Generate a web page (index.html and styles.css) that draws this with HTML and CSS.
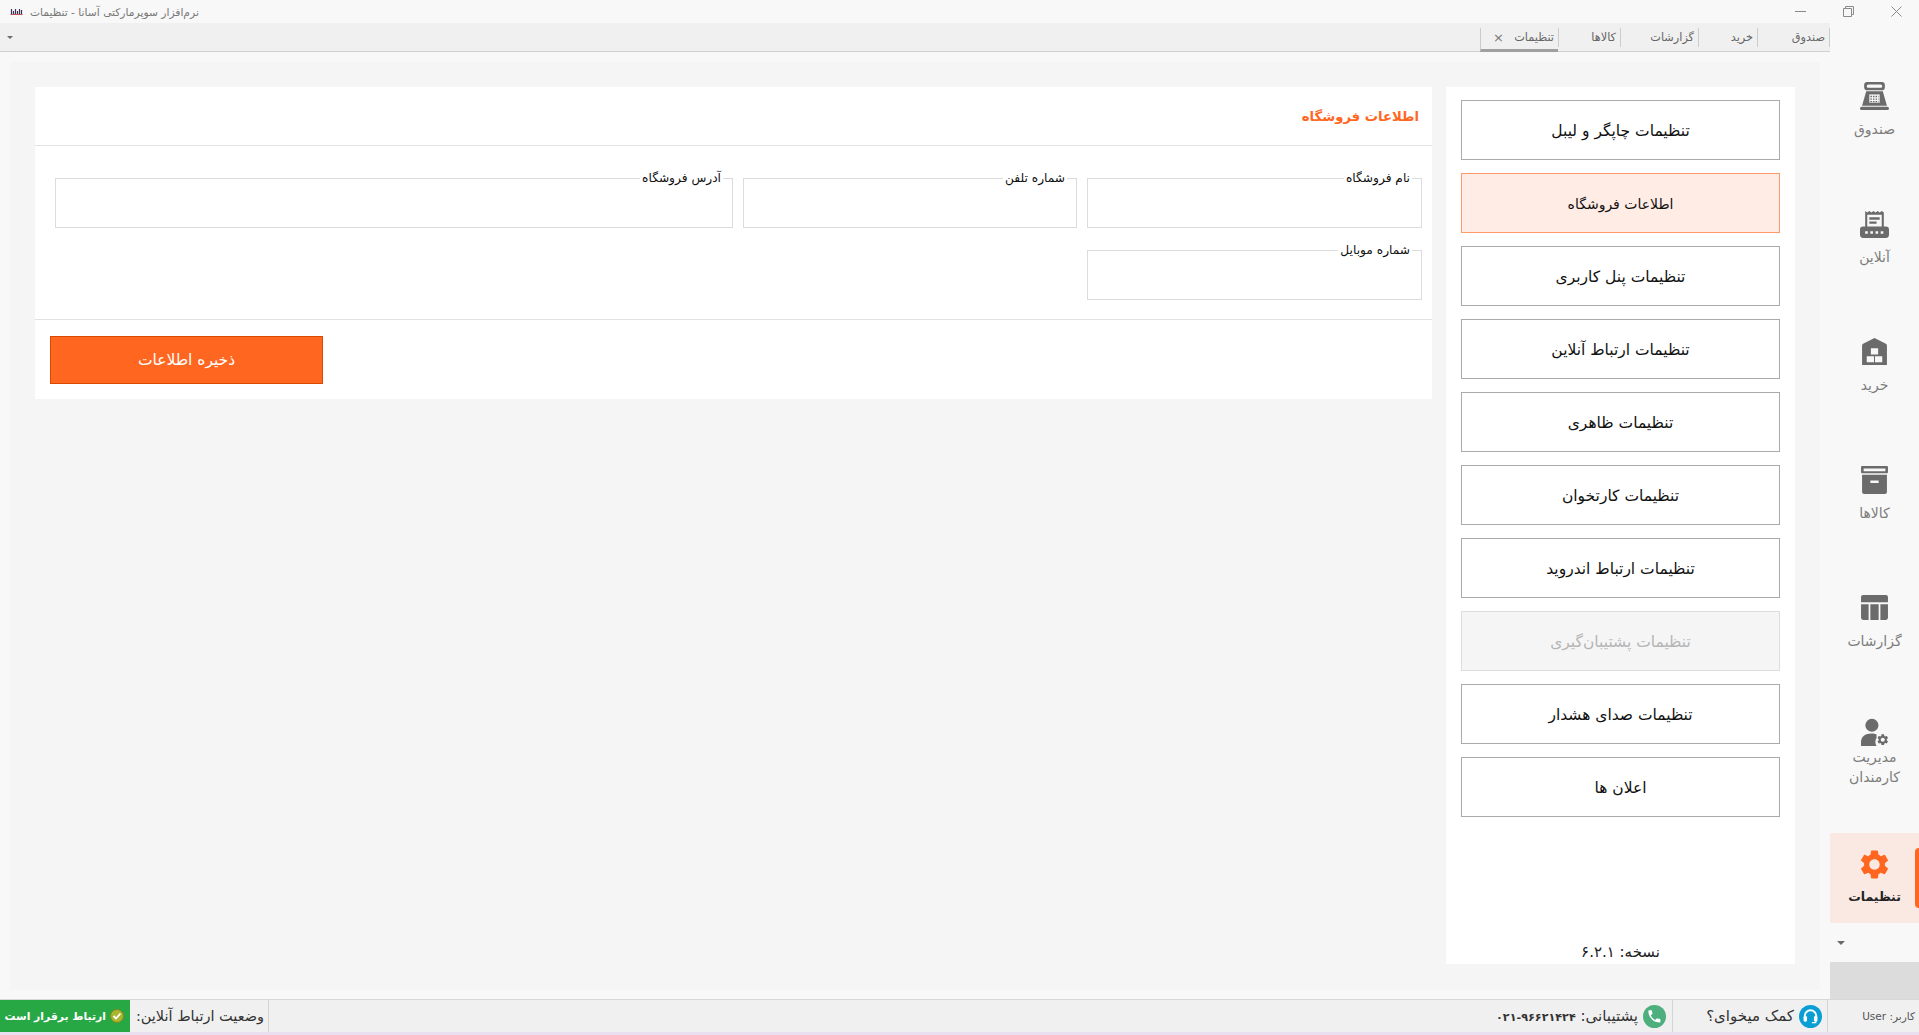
FILE: index.html
```html
<!DOCTYPE html>
<html lang="fa" dir="rtl">
<head>
    <meta charset="UTF-8">
    <title>نرم‌افزار سوپرمارکتی آسانا - تنظیمات</title>
    <link rel="stylesheet" href="styles.css">
</head>
<body>
    <header class="titlebar">
        <div class="win-controls">
            <svg class="win-btn" viewBox="0 0 11 11"><path d="M0.5 0.5 10.5 10.5M10.5 0.5 0.5 10.5" stroke="#8a8a8a" fill="none"/></svg>
            <svg class="win-btn" viewBox="0 0 11 11"><path d="M0.5 2.5h8v8h-8zM2.5 2.5v-2h8v8h-2" stroke="#8a8a8a" fill="none"/></svg>
            <svg class="win-btn" viewBox="0 0 11 11"><path d="M0 5.5h11" stroke="#8a8a8a" fill="none"/></svg>
        </div>
        <div class="app-title">
            <span>نرم‌افزار سوپرمارکتی آسانا - تنظیمات</span>
            <svg class="app-icon" viewBox="0 0 12 9"><path d="M1 1v6M3 3v4M5 1v6M7 3v4M9 1v6M11 2v5" stroke="#3a3154" stroke-width="1.2" fill="none"/><path d="M0 6.5h12" stroke="#c0555a" stroke-width="1"/></svg>
        </div>
    </header>

    <div class="app-row">
        <nav class="sidebar">
            <a class="side-item">
                <svg class="side-icon" viewBox="0 0 28 28"><path fill="#6b6b6b" d="M7 0h14a3 3 0 0 1 3 3v2a3 3 0 0 1-3 3H7a3 3 0 0 1-3-3V3a3 3 0 0 1 3-3zm1 2.500a1 1 0 0 0 0 3h12a1 1 0 0 0 0-3zM6 9h16l4 14H2zM1.500 24h25a1.500 1.500 0 0 1 0 3h-25a1.500 1.500 0 0 1 0-3z"/><path fill="#f8f8f8" d="M9 12h10v8H9z"/><path stroke="#6b6b6b" stroke-width="1.300" stroke-dasharray="1.500 1" fill="none" d="M10 14h8M10 16.500h8M10 19h8"/></svg>
                <span>صندوق</span>
            </a>
            <a class="side-item">
                <svg class="side-icon" viewBox="0 0 28 28"><path fill="#6b6b6b" d="M5 1l2 1.500L9 1l2 1.500L13 1l2 1.500L17 1l2 1.500L21 1l2 1.500V16h-2V4.500H7V16H5zM9 7h10v2.300H9zM9 11h7v2.300H9zM3 16h22a3 3 0 0 1 3 3v5a3 3 0 0 1-3 3H3a3 3 0 0 1-3-3v-5a3 3 0 0 1 3-3z"/><path fill="#f8f8f8" d="M5 20.500h2.500V23H5zM10 20.500h2.500V23H10zM15 20.500h2.500V23H15zM20 20.500h2.500V23H20z"/></svg>
                <span>آنلاین</span>
            </a>
            <a class="side-item">
                <svg class="side-icon" viewBox="0 0 28 28"><path fill="#6b6b6b" d="M14 0l11 5.500a2 2 0 0 1 1 1.800V26H2V7.300a2 2 0 0 1 1-1.800z"/><path fill="#f8f8f8" d="M10.500 10h7v6h-7zM6.500 17.500h7v6h-7zM14.500 17.500h7v6h-7z"/><path stroke="#6b6b6b" d="M14 17v7" stroke-width="1"/></svg>
                <span>خرید</span>
            </a>
            <a class="side-item">
                <svg class="side-icon" viewBox="0 0 28 28"><path fill="#6b6b6b" d="M2 0h24a1 1 0 0 1 1 1v5a1 1 0 0 1-1 1H2a1 1 0 0 1-1-1V1a1 1 0 0 1 1-1zm0 8.500h24V25a2 2 0 0 1-2 2H4a2 2 0 0 1-2-2z"/><path fill="#f8f8f8" d="M3.500 2.500h21v2.500h-21zM10 14h8v2.500h-8z"/></svg>
                <span>کالاها</span>
            </a>
            <a class="side-item">
                <svg class="side-icon" viewBox="0 0 28 28"><path fill="#6b6b6b" d="M3 1h22a2 2 0 0 1 2 2v5H1V3a2 2 0 0 1 2-2zM1 10h7.300v15H3a2 2 0 0 1-2-2zM10 10h8v15h-8zM19.700 10H27v13a2 2 0 0 1-2 2h-5.300z"/></svg>
                <span>گزارشات</span>
            </a>
            <a class="side-item side-item-tall">
                <svg class="side-icon" viewBox="0 0 28 28"><circle cx="11.500" cy="7" r="6.300" fill="#6b6b6b"/><path fill="#6b6b6b" d="M1 27v-3.500C1 18 5 15 11 15c2 0 3.500.3 5 1v3a8 8 0 0 0 0 8z"/><g transform="translate(15.500 14.500) scale(.54)"><path fill="#6b6b6b" d="M19.140 12.940c.04-.3.06-.61.06-.94 0-.32-.02-.64-.07-.94l2.030-1.580c.18-.14.23-.41.12-.61l-1.920-3.320c-.12-.22-.37-.29-.59-.22l-2.390.96c-.5-.38-1.030-.7-1.620-.94l-.36-2.540c-.04-.24-.24-.41-.48-.41h-3.840c-.24 0-.43.17-.47.41l-.36 2.540c-.59.24-1.130.57-1.620.94l-2.390-.96c-.22-.08-.47 0-.59.22L2.740 8.870c-.12.21-.08.47.12.61l2.030 1.580c-.05.3-.09.63-.09.94s.02.64.07.94l-2.030 1.580c-.18.14-.23.41-.12.61l1.920 3.320c.12.22.37.29.59.22l2.390-.96c.5.38 1.030.7 1.620.94l.36 2.540c.05.24.24.41.48.41h3.840c.24 0 .44-.17.47-.41l.36-2.540c.59-.24 1.130-.56 1.620-.94l2.390.96c.22.08.47 0 .59-.22l1.920-3.320c.12-.22.07-.47-.12-.61l-2.010-1.580zM12 15.600c-1.980 0-3.600-1.620-3.600-3.600s1.620-3.600 3.600-3.600 3.600 1.620 3.600 3.600-1.620 3.600-3.600 3.600z"/></g></svg>
                <span>مدیریت<br>کارمندان</span>
            </a>
            <a class="side-item side-item-active">
                <svg class="side-icon" viewBox="2 2 20 20"><path fill="#ff661f" d="M19.140 12.940c.04-.3.06-.61.06-.94 0-.32-.02-.64-.07-.94l2.030-1.580c.18-.14.23-.41.12-.61l-1.920-3.320c-.12-.22-.37-.29-.59-.22l-2.390.96c-.5-.38-1.030-.7-1.620-.94l-.36-2.540c-.04-.24-.24-.41-.48-.41h-3.840c-.24 0-.43.17-.47.41l-.36 2.540c-.59.24-1.130.57-1.620.94l-2.390-.96c-.22-.08-.47 0-.59.22L2.740 8.870c-.12.21-.08.47.12.61l2.030 1.580c-.05.3-.09.63-.09.94s.02.64.07.94l-2.030 1.580c-.18.14-.23.41-.12.61l1.920 3.320c.12.22.37.29.59.22l2.390-.96c.5.38 1.030.7 1.620.94l.36 2.540c.05.24.24.41.48.41h3.840c.24 0 .44-.17.47-.41l.36-2.540c.59-.24 1.130-.56 1.620-.94l2.390.96c.22.08.47 0 .59-.22l1.920-3.320c.12-.22.07-.47-.12-.61l-2.010-1.580zM12 15.600c-1.980 0-3.600-1.620-3.600-3.600s1.620-3.600 3.600-3.600 3.600 1.620 3.600 3.600-1.620 3.600-3.600 3.600z"/></svg>
                <span>تنظیمات</span>
            </a>
            <div class="side-more"><i class="caret"></i></div>
            <div class="side-fill"></div>
        </nav>

        <div class="main-col">
            <div class="tabstrip">
                <div class="tab tab-w1">صندوق</div>
                <div class="tab tab-w2">خرید</div>
                <div class="tab tab-w3">گزارشات</div>
                <div class="tab tab-w4">کالاها</div>
                <div class="tab tab-active">
                    <span>تنظیمات</span>
                    <span class="tab-close">×</span>
                </div>
                <i class="caret tab-caret"></i>
            </div>

            <main class="workspace">
                <aside class="menu-card">
                    <button class="menu-btn">تنظیمات چاپگر و لیبل</button>
                    <button class="menu-btn menu-btn-active">اطلاعات فروشگاه</button>
                    <button class="menu-btn">تنظیمات پنل کاربری</button>
                    <button class="menu-btn">تنظیمات ارتباط آنلاین</button>
                    <button class="menu-btn">تنظیمات ظاهری</button>
                    <button class="menu-btn">تنظیمات کارتخوان</button>
                    <button class="menu-btn">تنظیمات ارتباط اندروید</button>
                    <button class="menu-btn menu-btn-disabled">تنظیمات پشتیبان‌گیری</button>
                    <button class="menu-btn">تنظیمات صدای هشدار</button>
                    <button class="menu-btn">اعلان ها</button>
                    <div class="version">نسخه: ۶.۲.۱</div>
                </aside>

                <section class="form-card">
                    <h2 class="form-title">اطلاعات فروشگاه</h2>
                    <div class="form-grid">
                        <div class="field"><label>نام فروشگاه</label><input type="text"></div>
                        <div class="field"><label>شماره تلفن</label><input type="text"></div>
                        <div class="field"><label>آدرس فروشگاه</label><input type="text"></div>
                        <div class="field"><label>شماره موبایل</label><input type="text"></div>
                    </div>
                    <div class="form-foot">
                        <button class="save-btn">ذخیره اطلاعات</button>
                    </div>
                </section>
            </main>
        </div>
    </div>

    <footer class="statusbar">
        <div class="st-cell st-user">کاربر: User</div>
        <div class="st-cell st-help">
            <svg class="st-icon" viewBox="0 0 24 24"><circle cx="12" cy="12" r="12" fill="#0a9fd4"/><path d="M6 14v-2.500a6 6 0 0 1 12 0V14" fill="none" stroke="#fff" stroke-width="2"/><rect x="4.800" y="11.500" width="3.600" height="6" rx="1.500" fill="#fff"/><rect x="15.600" y="11.500" width="3.600" height="6" rx="1.500" fill="#fff"/><path d="M17.500 17v1.500h-4" fill="none" stroke="#fff" stroke-width="1.300"/></svg>
            <span>کمک میخوای؟</span>
        </div>
        <div class="st-cell st-support">
            <svg class="st-icon" viewBox="0 0 24 24"><circle cx="12" cy="12" r="12" fill="#4caf7d"/><path fill="#fff" transform="translate(3.500 3.500) scale(.7)" d="M6.620 10.790c1.440 2.830 3.760 5.140 6.590 6.590l2.200-2.200c.27-.27.67-.36 1.020-.24 1.120.37 2.330.57 3.570.57.55 0 1 .45 1 1V20c0 .55-.45 1-1 1-9.390 0-17-7.610-17-17 0-.55.45-1 1-1h3.500c.55 0 1 .45 1 1 0 1.250.2 2.450.57 3.570.11.35.03.74-.25 1.020l-2.200 2.200z"/></svg>
            <span>پشتیبانی: <b dir="ltr" class="st-phone">۰۲۱-۹۶۶۲۱۴۲۴</b></span>
        </div>
        <div class="st-cell st-label">وضعیت ارتباط آنلاین:</div>
        <div class="st-online">
            <svg class="st-check" viewBox="0 0 14 14"><circle cx="7" cy="7" r="6.500" fill="#a9b72f" stroke="#7d8a1c"/><path d="M3.500 7l2.500 2.500 4.500-5" fill="none" stroke="#fff" stroke-width="1.800"/></svg>
            <span>ارتباط برقرار است</span>
        </div>
    </footer>
</body>
</html>
```

FILE: styles.css
```css
* {
    box-sizing: border-box;
}
html, body {
    height: 100%;
}
body {
    margin: 0;
    overflow: hidden;
    display: flex;
    flex-direction: column;
    background-color: #f8f8f8;
    font-family: "DejaVu Sans", "Noto Sans", sans-serif;
    font-size: 12px;
    color: #222;
}
.caret {
    display: block;
    width: 0;
    height: 0;
    border-left: 4px solid transparent;
    border-right: 4px solid transparent;
    border-top: 4px solid #6b6b6b;
}

/* title bar */
.titlebar {
    height: 23px;
    flex: none;
    display: flex;
    align-items: center;
}
.win-controls {
    display: flex;
    gap: 37px;
    padding-right: 17px;
    padding-left: 13px;
}
.win-btn {
    width: 11px;
    height: 11px;
}
.app-title {
    margin-right: auto;
    padding-left: 10px;
    padding-top: 1px;
    display: flex;
    align-items: center;
    gap: 7px;
    font-size: 10.700px;
    color: #777;
}
.app-icon {
    width: 13px;
    height: 9px;
}

/* layout */
.app-row {
    flex: 1;
    display: flex;
    min-height: 0;
}
.main-col {
    flex: 1;
    display: flex;
    flex-direction: column;
    min-width: 0;
}

/* side nav */
.sidebar {
    width: 89px;
    flex: none;
    display: flex;
    flex-direction: column;
    padding-top: 39px;
}
.side-item {
    height: 128px;
    flex: none;
    padding-top: 20px;
    display: flex;
    flex-direction: column;
    align-items: center;
    text-align: center;
    color: #7d7d7d;
    font-size: 14px;
    line-height: 20px;
}
.side-icon {
    width: 29px;
    height: 29px;
    margin-bottom: 8px;
}
.side-item-tall {
    padding-top: 16px;
}
.side-item-tall .side-icon {
    margin-bottom: 0;
}
.side-item-active {
    height: 90px;
    margin-top: 3px;
    padding-top: 17px;
    position: relative;
    background-color: #fae9e3;
    color: #222;
    font-weight: bold;
    font-size: 12.500px;
}
.side-item-active::after {
    content: "";
    position: absolute;
    right: 0;
    top: 15px;
    width: 4px;
    height: 60px;
    background-color: #ff661f;
    border-radius: 4px 0 0 4px;
}
.side-more {
    height: 39px;
    flex: none;
    display: flex;
    align-items: center;
    justify-content: flex-end;
    padding-left: 7px;
}
.side-fill {
    flex: 1;
    background-color: #dcdcdc;
}

/* tabs */
.tabstrip {
    height: 29px;
    flex: none;
    display: flex;
    align-items: flex-start;
    padding-top: 5px;
    background-color: #f0f0f0;
    border-bottom: 1px solid #d0d0d0;
    font-size: 11.300px;
    color: #666;
    position: relative;
}
.tab {
    height: 19px;
    line-height: 20px;
    padding-right: 4px;
    border-left: 1px solid #ccc;
}
.tab-w1 {
    width: 73px;
    border-right: 1px solid #ccc;
}
.tab-w2 {
    width: 59px;
}
.tab-w3 {
    width: 78px;
}
.tab-w4 {
    width: 62px;
}
.tab-active {
    width: 78px;
    height: 24px;
    display: flex;
    justify-content: space-between;
    padding-left: 12px;
    border-bottom: 3px solid #a0a0a0;
}
.tab-close {
    font-size: 13px;
    color: #777;
}
.tab-caret {
    position: absolute;
    left: 7px;
    top: 13px;
    border-left-width: 3px;
    border-right-width: 3px;
    border-top-width: 3px;
}

/* content */
.workspace {
    flex: 1;
    display: flex;
    gap: 14px;
    margin: 10px 10px 9px 10px;
    padding: 25px 25px 26px 25px;
    background-color: #f5f5f5;
    min-height: 0;
}
.menu-card {
    width: 349px;
    flex: none;
    background: #fff;
    padding: 13px 15px 0;
    display: flex;
    flex-direction: column;
    gap: 13px;
}
.menu-btn {
    height: 60px;
    flex: none;
    padding-top: 3px;
    background: #fff;
    border: 1px solid #aaa;
    font-family: inherit;
    font-size: 15.500px;
    color: #111;
}
.menu-btn-active {
    background-color: #ffece5;
    border-color: #ff9a6b;
    font-size: 14px;
}
.menu-btn-disabled {
    background-color: #f5f5f5;
    border-color: #ddd;
    color: #b5b5b5;
}
.version {
    margin-top: auto;
    padding-bottom: 2px;
    text-align: center;
    font-size: 15px;
    line-height: 20px;
}
.form-card {
    flex: 1;
    align-self: flex-start;
    height: 312px;
    background: #fff;
}
.form-title {
    height: 59px;
    margin: 0;
    padding: 20px 13px 0 0;
    border-bottom: 1px solid #e2e2e2;
    font-size: 13.200px;
    line-height: 20px;
    font-weight: bold;
    color: #ff661f;
}
.form-grid {
    display: grid;
    grid-template-columns: 335px 334px 678px;
    gap: 22px 10px;
    padding: 32px 10px 19px 0;
    height: 174px;
    align-content: start;
    border-bottom: 1px solid #e2e2e2;
}
.field {
    position: relative;
    height: 50px;
    border: 1px solid #dcdcdc;
}
.field label {
    position: absolute;
    top: -9px;
    right: 9px;
    padding: 0 2px;
    background: #fff;
    font-size: 12.200px;
    line-height: 16px;
    color: #111;
}
.field input {
    width: 100%;
    height: 100%;
    border: none;
    background: transparent;
}
.form-foot {
    padding: 16px 0 0 15px;
}
.save-btn {
    display: block;
    width: 273px;
    height: 48px;
    margin-right: auto;
    background-color: #ff661f;
    border: 1px solid #d94a00;
    color: #fff;
    font-family: inherit;
    font-size: 15.500px;
}

/* status bar */
.statusbar {
    height: 36px;
    flex: none;
    display: flex;
    background-color: #f0f0f0;
    border-top: 1px solid #d8d8d8;
    border-bottom: 3px solid #e9dff0;
    font-size: 15px;
    color: #333;
}
.st-cell {
    display: flex;
    align-items: center;
    gap: 5px;
    padding-right: 4px;
    border-left: 1px solid #d4d4d4;
    white-space: nowrap;
}
.st-user {
    width: 92px;
    font-size: 10.500px;
    color: #555;
}
.st-help {
    width: 155px;
    padding-right: 5px;
}
.st-support {
    flex: 1;
    border-left: none;
    padding-right: 6px;
}
.st-phone {
    font-size: 11.200px;
}
.st-label {
    width: 139px;
    flex: none;
    border-left: none;
    border-right: 1px solid #d4d4d4;
    font-size: 14.500px;
}
.st-online {
    width: 130px;
    flex: none;
    display: flex;
    align-items: center;
    gap: 4px;
    padding-right: 6px;
    background-color: #28a745;
    color: #fff;
    font-size: 10.800px;
    font-weight: bold;
    white-space: nowrap;
}
.st-icon {
    width: 23px;
    height: 23px;
    flex: none;
}
.st-check {
    width: 14px;
    height: 14px;
    flex: none;
}
```
